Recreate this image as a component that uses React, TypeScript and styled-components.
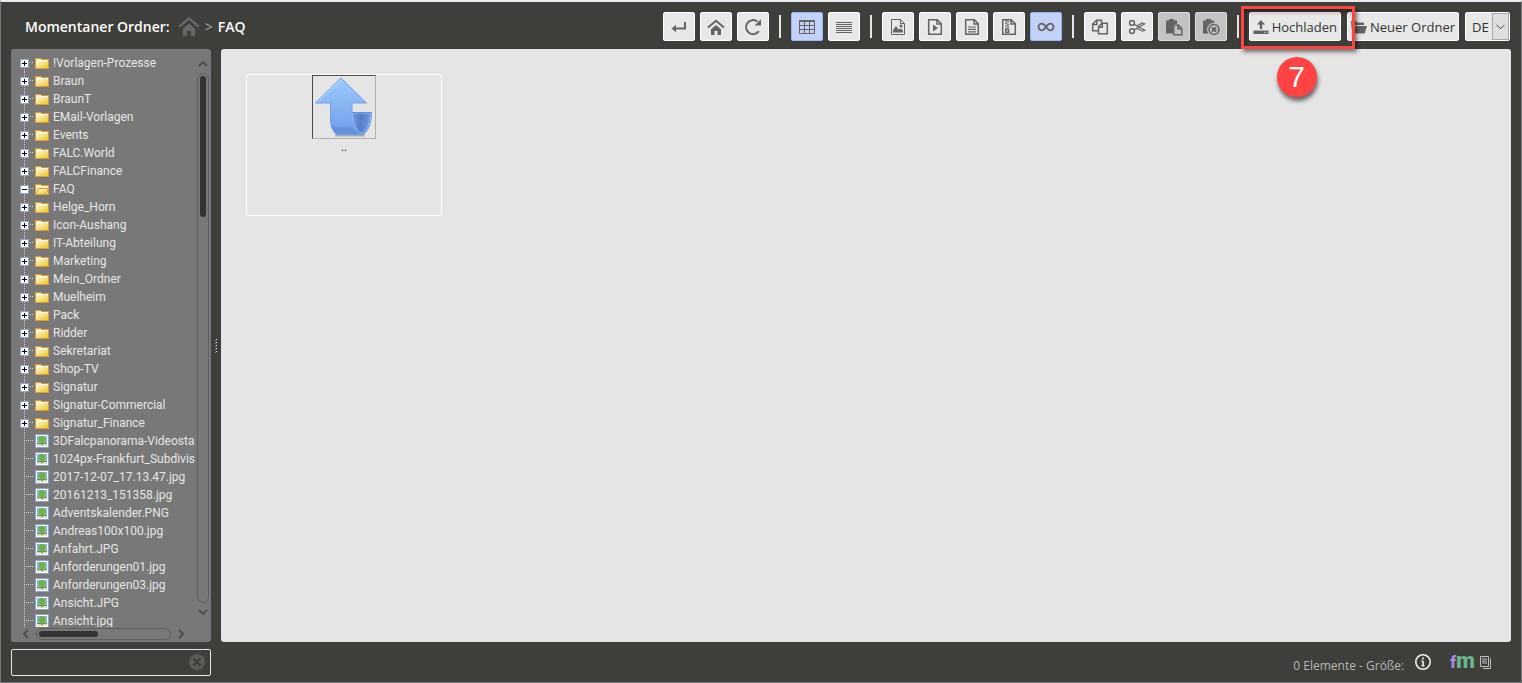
import React from 'react';
import styled, { createGlobalStyle } from 'styled-components';

const GlobalStyle = createGlobalStyle`
  *, *::before, *::after { box-sizing: border-box; }
  html, body { margin: 0; background: #3e3e3a; }
  body { font-family: "Open Sans", "Noto Sans", sans-serif; font-size: 13px; }
  button, input, select { font: inherit; margin: 0; }
`;

const Shell = styled.div`
  display: flex;
  flex-direction: column;
  height: 100vh;
  padding: 0 10px;
  background: #3e3e3a;
  border: 1px solid #77777a;
  border-top: 2px solid #e9ebed;
  overflow: hidden;
`;

const Header = styled.header`
  display: flex;
  align-items: center;
  justify-content: space-between;
  flex: none;
  height: 47px;
  padding: 2px 1px 0 14px;
`;

const Breadcrumb = styled.nav`
  display: flex;
  align-items: center;
  color: #fff;
  font-size: 14px;
  font-weight: 600;
  white-space: nowrap;
`;

const HomeLink = styled.a`
  display: flex;
  margin: 0 5px 2px 8px;
  color: #686868;
`;

const Chevron = styled.span`
  margin-right: 5px;
  color: #aaa;
  font-weight: 400;
`;

const Toolbar = styled.div`
  display: flex;
  align-items: center;
  gap: 10px;
`;

const ToolGroup = styled.div<{ $gap?: number }>`
  display: flex;
  gap: ${(p) => p.$gap ?? 5}px;
`;

const Divider = styled.span`
  width: 2px;
  height: 23px;
  background: #e5e5e5;
`;

type Tone = 'plain' | 'active' | 'disabled';
const fills = { plain: '#e8e8e8', active: '#c2d2f8', disabled: '#c3c3c3' };
const edges = { plain: '#ffffff', active: '#98b4f4', disabled: '#dedede' };

const ToolButton = styled.button<{ $tone?: Tone }>`
  display: flex;
  align-items: center;
  justify-content: center;
  width: 32px;
  height: 29px;
  padding: 0;
  color: #646464;
  background: ${(p) => fills[p.$tone ?? 'plain']};
  border: 1px solid ${(p) => edges[p.$tone ?? 'plain']};
  border-radius: 2px;
`;

const LabelButton = styled(ToolButton)`
  width: auto;
  gap: 3px;
  padding: 0 3px;

  span { color: #333; white-space: nowrap; }
`;

const Highlighted = styled.div`
  position: relative;
`;

const HighlightFrame = styled.div`
  position: absolute;
  z-index: 2;
  inset: -6px -14px -8px -8px;
  border: 3px solid #ff4343;
  box-shadow: 2px 3px 4px rgba(0, 0, 0, 0.5), inset 2px 3px 4px rgba(0, 0, 0, 0.4);
  pointer-events: none;
`;

const StepBadge = styled.div`
  position: absolute;
  z-index: 2;
  top: 45px;
  left: 28px;
  display: flex;
  align-items: center;
  justify-content: center;
  width: 40px;
  height: 40px;
  border-radius: 50%;
  background: #ff4343;
  box-shadow: 1px 4px 4px rgba(0, 0, 0, 0.55);
  color: #fff;
  font: 30px "Liberation Sans", Arial, sans-serif;
`;

const LanguageBox = styled.div`
  display: flex;
  position: relative;
`;

const LanguageSelect = styled.select`
  appearance: none;
  width: 45px;
  height: 29px;
  padding: 0 0 0 6px;
  color: #333;
  background: #e8e8e8;
  border: 1px solid #fff;
  border-radius: 2px;
`;

const SelectArrow = styled.span`
  position: absolute;
  top: 1px;
  right: 1px;
  display: flex;
  align-items: center;
  justify-content: center;
  width: 17px;
  height: 27px;
  background: #dedede;
  border: 1px solid #a8a8a8;
  pointer-events: none;
`;

const Body = styled.div`
  display: grid;
  grid-template-columns: 200px 10px minmax(0, 1fr);
  flex: 1;
  min-height: 0;
`;

const Sidebar = styled.aside`
  display: grid;
  grid-template-columns: minmax(0, 1fr) 16px;
  grid-template-rows: minmax(0, 1fr) 15px;
  min-height: 0;
  background: #787878;
  border-radius: 3px;
`;

const Tree = styled.ul`
  margin: 5px 0 0;
  padding: 0 0 0 9px;
  overflow: hidden;
  list-style: none;
`;

const TreeRow = styled.li`
  display: flex;
  align-items: center;
  height: 18px;
  font-family: Roboto, "Open Sans", sans-serif;
  font-size: 12px;
  white-space: nowrap;
`;

const Gutter = styled.span<{ $first?: boolean }>`
  display: flex;
  align-items: center;
  flex: none;
  width: 15px;
  height: 18px;
  background:
    repeating-linear-gradient(90deg, #d0d0d0 0 1px, transparent 1px 2px) 4px 8px / 9px 1px no-repeat,
    repeating-linear-gradient(#d0d0d0 0 1px, transparent 1px 2px) 4px ${(p) => (p.$first ? 9 : 0)}px / 1px 18px no-repeat;
`;

const Expander = styled.button`
  display: flex;
  width: 9px;
  height: 9px;
  padding: 0;
  border: 0;
  background: none;
`;

const TreeLink = styled.a`
  display: flex;
  align-items: center;
  gap: 4px;
  color: #e6e6e6;
  text-decoration: none;
`;

const ScrollColumn = styled.div`
  display: flex;
  flex-direction: column;
  align-items: center;
  justify-content: space-between;
  padding: 12px 0;
`;

const ScrollRow = styled.div`
  display: flex;
  align-items: center;
  justify-content: space-between;
  padding: 0 11px 1px 12px;
`;

const Track = styled.div<{ $row?: boolean }>`
  ${(p) => (p.$row ? 'height: 12px; margin: 0 7px;' : 'width: 12px; margin: 6px 0;')}
  flex: 1;
  padding: 2px;
  border: 1px solid #606060;
  border-radius: 6px;
`;

const Thumb = styled.div<{ $row?: boolean }>`
  width: ${(p) => (p.$row ? '46%' : '6px')};
  height: ${(p) => (p.$row ? '6px' : '27%')};
  background: #333;
  border-radius: 3px;
`;

const Splitter = styled.div`
  display: flex;
  align-items: center;
  justify-content: center;
`;

const Content = styled.main`
  padding: 25px;
  background: #e5e5e5;
  border-radius: 3px;
`;

const FileCard = styled.figure`
  display: flex;
  flex-direction: column;
  align-items: center;
  width: 196px;
  height: 142px;
  margin: 0;
  border: 1px solid #fff;
  border-radius: 2px;
`;

const Thumbnail = styled.a`
  display: flex;
  width: 64px;
  height: 64px;
  border: 1px solid;
  border-color: #4a4a46 #b0b0b0 #b0b0b0 #4a4a46;
`;

const FileName = styled.figcaption`
  color: #111;
  font-size: 11px;
  line-height: 16px;
`;

const Footer = styled.footer`
  display: flex;
  align-items: center;
  justify-content: space-between;
  flex: none;
  height: 40px;
  padding-right: 19px;
`;

const SearchBox = styled.div`
  display: flex;
  align-items: center;
  width: 200px;
  height: 27px;
  padding-right: 5px;
  border: 1px solid #e5e5e5;
  border-radius: 2px;
`;

const SearchInput = styled.input`
  flex: 1;
  min-width: 0;
  padding: 0 6px;
  color: #e5e5e5;
  background: none;
  border: 0;
  outline: 0;
`;

const ClearButton = styled.button`
  display: flex;
  padding: 0;
  background: none;
  border: 0;
`;

const Status = styled.div`
  display: flex;
  align-items: center;
  color: #b8b8b8;
`;

const StatusText = styled.span`
  margin-right: 10px;
  padding-top: 6px;
  font-size: 12px;
`;

const Logo = styled.a`
  margin: 0 5px 0 18px;
  color: #68b58c;
  font: 900 22px/20px Roboto, sans-serif;
  text-decoration: none;

  span { color: #a98be0; font-size: 16px; }
`;

type IconProps = { children: React.ReactNode; w?: number; h?: number };
const Icon = ({ children, w = 18, h = 18 }: IconProps) => (
  <svg width={w} height={h} viewBox={`0 0 ${w} ${h}`} fill="none" stroke="currentColor" strokeWidth="1.5" aria-hidden="true">
    {children}
  </svg>
);

const HomeShape = () => (
  <>
    <path d="M1 9.6 9 2.8l8 6.8" strokeWidth="2" />
    <path d="M4 11.2 9 7l5 4.2V17h-3.5v-4h-3v4H4z" fill="currentColor" stroke="none" />
  </>
);

const Page = () => <path d="M2.7 1.7h8.6l4 4v10.6H2.7zM11 1.9V6h4.1" />;
const solid = { fill: 'currentColor', stroke: 'none' };

const EnterIcon = () => (
  <Icon><path d="M15 4v6.5H5" strokeWidth="2" /><path {...solid} d="M1.5 10.5 6 6.8v7.4z" /></Icon>
);
const HomeIcon = () => <Icon><HomeShape /></Icon>;
const RefreshIcon = () => (
  <Icon>
    <path d="M14.8 13.2A7 7 0 1 1 13.4 3.6" strokeWidth="2" />
    <path {...solid} d="M17 1.3v6.2h-6.4z" />
  </Icon>
);
const GridIcon = () => (
  <Icon>
    <path d="M1 3h16" strokeWidth="2" />
    <path d="M1.5 3v12.5h15V3M6.5 4v12M11.5 4v12M1 7.5h16M1 11.5h16" strokeWidth="1" />
  </Icon>
);
const ListIcon = () => (
  <Icon><path d="M1 4.5h16M1 6.5h16M1 8.5h16M1 10.5h16M1 12.5h16M1 14.5h16" strokeWidth="1" /></Icon>
);
const ImageIcon = () => (
  <Icon>
    <path d="M2.5 1.5h9l4 4v11h-13zM11.5 2v3.5H15" strokeWidth="1" />
    <path {...solid} d="M4 14.5V12l3-4 2.5 3.5 2-1 2.5 2v2z" /><circle {...solid} cx="12" cy="8" r="1.5" />
  </Icon>
);
const VideoIcon = () => <Icon><Page /><path {...solid} d="M7 6.5v7l5-3.5z" /></Icon>;
const TextIcon = () => <Icon><Page /><path d="M5 9h8M5 11.4h8M5 13.8h8" strokeWidth="1.2" /></Icon>;
const ZipIcon = () => (
  <Icon>
    <Page />
    <path d="M6.2 2v8.5" strokeDasharray="1.3 1.3" strokeWidth="2" />
    <path d="M8 3.3v7" strokeDasharray="1.3 1.3" strokeWidth="2" />
    <path d="M5.8 11.2h2.8v3H5.8z" />
  </Icon>
);
const InfinityIcon = () => (
  <Icon><path d="M9 9C7.3 6.4 6.3 5.7 4.8 5.7a3.3 3.3 0 0 0 0 6.6C6.3 12.3 7.3 11.6 9 9s2.7-3.3 4.2-3.3a3.3 3.3 0 0 1 0 6.6C11.7 12.3 10.7 11.6 9 9z" strokeWidth="1.8" /></Icon>
);
const CopyIcon = () => (
  <Icon>
    <path d="M7 12.8H1.7V6L5.5 2.2h5V5M5.8 2.4v4H2" />
    <path d="M7.5 8.8 11 5.2h5.3v10.5H7.5zM11.3 5.4v3.8H7.7" />
  </Icon>
);
const CutIcon = () => (
  <Icon>
    <circle cx="4" cy="4.9" r="2.4" /><circle cx="4" cy="13.1" r="2.4" />
    <path d="m6 6.3 10.7 6-2.4.9-5-2.8-3.3 1.3M6 11.8l10.7-6-2.4-.9-5 2.8L6 6.4" strokeWidth="1.2" />
  </Icon>
);
const PasteIcon = () => (
  <Icon>
    <path {...solid} d="M1 2.5h3V1h5v1.5h3V6H8v9.5H1z" />
    <path d="M8.7 7h4.5l3.6 3.400v6.400H8.7zM13 7.2v3.5h3.6" />
  </Icon>
);
const ClearClipIcon = () => (
  <Icon>
    <path {...solid} d="M1 2.5h3V1h5v1.5h3V5a6.500 6.500 0 0 0-5.500 10.500H1z" />
    <circle cx="12" cy="11.5" r="5" />
    <path d="m10 9.5 4 4M14 9.5l-4 4" strokeWidth="2.2" />
  </Icon>
);
const UploadIcon = () => (
  <Icon w={16}>
    <path {...solid} d="M8 2 4 6.5h2.8V11h2.4V6.5H12zM.5 12.5h15V16H.5z" />
    <path d="M11 14.3h1M13.3 14.3h1" stroke="#e8e8e8" strokeWidth="1" />
  </Icon>
);
const FolderIcon = () => (
  <Icon w={16}><path {...solid} d="M0 3h5l1 1.5h7V7H3L.8 12zM3.4 8H16l-2.3 7.5H.5z" /></Icon>
);

const TreeFolder = ({ open }: { open?: boolean }) => (
  <svg width="14" height="12" viewBox="0 0 14 12" aria-hidden="true">
    <defs>
      <linearGradient id="gold" x1="0" y1="0" x2="1" y2="1">
        <stop offset="0" stopColor="#fffbe0" /><stop offset="1" stopColor="#efc51c" />
      </linearGradient>
    </defs>
    <path d="M.5 1.5h5l1 1h7v9H.5z" fill="#fff3b8" stroke="#dc9a35" />
    {open
      ? <path d="M3.5 5.5h10l-2.5 6H1z" fill="url(#gold)" stroke="#dc9a35" />
      : <path d="M1 5h5l1-1h6v7H1z" fill="url(#gold)" />}
    {!open && <path d="M1.5 4.5H6l1-1h6" fill="none" stroke="#fff" />}
  </svg>
);
const TreeImage = () => (
  <svg width="14" height="14" viewBox="0 0 14 14" aria-hidden="true">
    <path d="M.5.5h13v13H.5z" fill="#fff" stroke="#86a5d8" />
    <path d="M2 2h10v10H2z" fill="#8db3e6" />
    <path d="M2 9h10v3H2z" fill="#d3e4c4" />
    <path d="M2 9.5h10" stroke="#5a9a42" />
    <circle cx="7" cy="5.5" r="3.4" fill="#6cb33f" />
    <path d="M7 9v2" stroke="#b97a3a" strokeWidth="2" />
  </svg>
);
const ExpandMark = ({ open }: { open?: boolean }) => (
  <svg width="9" height="9" viewBox="0 0 9 9" aria-hidden="true">
    <path d="M.5.5h8v8h-8z" fill="#fff" stroke="#8fa5be" />
    <path d={open ? 'M2 4.5h5' : 'M2 4.5h5M4.5 2v5'} stroke="#000" />
  </svg>
);
const Arrow = ({ d, row }: { d: string; row?: boolean }) => (
  <svg width={row ? 6 : 10} height={row ? 10 : 6} viewBox={row ? '0 0 6 10' : '0 0 10 6'} fill="none" stroke="#4e4e4e" strokeWidth="2" aria-hidden="true">
    <path d={d} />
  </svg>
);

const UpArrow = () => (
  <svg width="62" height="62" viewBox="0 0 62 62" aria-hidden="true">
    <defs>
      <linearGradient id="sky" x1="0" y1="0" x2="0" y2="1">
        <stop offset="0" stopColor="#9ccbfb" /><stop offset="0.8" stopColor="#7ba6ee" /><stop offset="1" stopColor="#6b97e0" />
      </linearGradient>
      <linearGradient id="curl" x1="0" y1="0" x2="1" y2="0">
        <stop offset="0" stopColor="#7299de" /><stop offset="0.45" stopColor="#567dc6" /><stop offset="1" stopColor="#7198e0" />
      </linearGradient>
    </defs>
    <path d="M22 59.5h30" stroke="#a5a9b0" strokeWidth="2" />
    <path d="M28 2 2.5 27h15v17c0 6 2 11 6 14.5H50c5-3 8.500-11 8.500-22H39V27h14.500z" fill="url(#sky)" stroke="#6ea0e8" />
    <path d="M18 48c3 4 8 4 21 3 2 3 4 6 7 7H24c-3-2-5-5-6-10z" fill="#6690da" />
    <path d="M39.500 37h18c0 9-4 19.500-9 19.500s-9-10-9-19.500z" fill="url(#curl)" stroke="#8db5f7" />
    <path d="M39 36.500h19.500" stroke="#6690e0" />
    <path d="M28 3.500 5 26" fill="none" stroke="#bfe0ff" />
  </svg>
);

const folders = [
  '!Vorlagen-Prozesse', 'Braun', 'BraunT', 'EMail-Vorlagen', 'Events', 'FALC.World', 'FALCFinance', 'FAQ',
  'Helge_Horn', 'Icon-Aushang', 'IT-Abteilung', 'Marketing', 'Mein_Ordner', 'Muelheim', 'Pack', 'Ridder',
  'Sekretariat', 'Shop-TV', 'Signatur', 'Signatur-Commercial', 'Signatur_Finance',
];
const files = [
  '3DFalcpanorama-Videosta', '1024px-Frankfurt_Subdivis', '2017-12-07_17.13.47.jpg', '20161213_151358.jpg',
  'Adventskalender.PNG', 'Andreas100x100.jpg', 'Anfahrt.JPG', 'Anforderungen01.jpg', 'Anforderungen03.jpg',
  'Ansicht.JPG', 'Ansicht.jpg',
];

type Tool = { label: string; icon: React.ReactNode; tone?: Tone };
const groups: Tool[][] = [
  [
    { label: 'Zurück', icon: <EnterIcon /> },
    { label: 'Start', icon: <HomeIcon /> },
    { label: 'Aktualisieren', icon: <RefreshIcon /> },
  ],
  [
    { label: 'Kacheln', icon: <GridIcon />, tone: 'active' },
    { label: 'Liste', icon: <ListIcon /> },
  ],
  [
    { label: 'Bilder', icon: <ImageIcon /> },
    { label: 'Videos', icon: <VideoIcon /> },
    { label: 'Dokumente', icon: <TextIcon /> },
    { label: 'Archive', icon: <ZipIcon /> },
    { label: 'Alle', icon: <InfinityIcon />, tone: 'active' },
  ],
  [
    { label: 'Kopieren', icon: <CopyIcon /> },
    { label: 'Ausschneiden', icon: <CutIcon /> },
    { label: 'Einfügen', icon: <PasteIcon />, tone: 'disabled' },
    { label: 'Zwischenablage leeren', icon: <ClearClipIcon />, tone: 'disabled' },
  ],
];

export default function App() {
  return (
    <>
      <GlobalStyle />
      <Shell>
        <Header>
          <Breadcrumb>
            Momentaner Ordner:
            <HomeLink href="#" aria-label="Start">
              <svg width="22" height="22" viewBox="0 0 18 18" fill="none" stroke="currentColor" aria-hidden="true"><HomeShape /></svg>
            </HomeLink>
            <Chevron>&gt;</Chevron>
            FAQ
          </Breadcrumb>
          <Toolbar>
            {groups.map((group, i) => (
              <React.Fragment key={i}>
                <ToolGroup>
                  {group.map((t) => (
                    <ToolButton key={t.label} $tone={t.tone} disabled={t.tone === 'disabled'} aria-label={t.label}>
                      {t.icon}
                    </ToolButton>
                  ))}
                </ToolGroup>
                <Divider />
              </React.Fragment>
            ))}
            <ToolGroup $gap={6}>
              <Highlighted>
                <LabelButton><UploadIcon /><span>Hochladen</span></LabelButton>
                <HighlightFrame />
                <StepBadge>7</StepBadge>
              </Highlighted>
              <LabelButton><FolderIcon /><span>Neuer Ordner</span></LabelButton>
              <LanguageBox>
                <LanguageSelect aria-label="Sprache" defaultValue="DE"><option>DE</option></LanguageSelect>
                <SelectArrow>
                  <svg width="9" height="6" viewBox="0 0 9 6" fill="none" stroke="#444" aria-hidden="true"><path d="m.5.8 4 4 4-4" /></svg>
                </SelectArrow>
              </LanguageBox>
            </ToolGroup>
          </Toolbar>
        </Header>

        <Body>
          <Sidebar>
            <Tree>
              {folders.map((name, i) => (
                <TreeRow key={name}>
                  <Gutter $first={i === 0}>
                    <Expander aria-label={`${name} umschalten`}><ExpandMark open={name === 'FAQ'} /></Expander>
                  </Gutter>
                  <TreeLink href="#"><TreeFolder open={name === 'FAQ'} />{name}</TreeLink>
                </TreeRow>
              ))}
              {files.map((name) => (
                <TreeRow key={name}>
                  <Gutter />
                  <TreeLink href="#"><TreeImage />{name}</TreeLink>
                </TreeRow>
              ))}
            </Tree>
            <ScrollColumn>
              <Arrow d="m1 5 4-4 4 4" />
              <Track><Thumb /></Track>
              <Arrow d="m1 1 4 4 4-4" />
            </ScrollColumn>
            <ScrollRow>
              <Arrow row d="M5 1 1 5l4 4" />
              <Track $row><Thumb $row /></Track>
              <Arrow row d="m1 1 4 4-4 4" />
            </ScrollRow>
          </Sidebar>
          <Splitter>
            <svg width="3" height="14" viewBox="0 0 3 14" aria-hidden="true">
              <path d="M.5 1v13" stroke="#888" strokeDasharray="1 2" /><path d="M1.5 0v14" stroke="#eee" strokeDasharray="1 2" />
            </svg>
          </Splitter>
          <Content>
            <FileCard>
              <Thumbnail href="#" aria-label="Übergeordneter Ordner"><UpArrow /></Thumbnail>
              <FileName>..</FileName>
            </FileCard>
          </Content>
        </Body>

        <Footer>
          <SearchBox>
            <SearchInput type="text" aria-label="Filter" />
            <ClearButton aria-label="Filter löschen">
              <svg width="16" height="16" viewBox="0 0 16 16" aria-hidden="true">
                <circle cx="8" cy="8" r="8" fill="#5b5b58" /><path d="m4.5 4.5 7 7M11.5 4.5l-7 7" stroke="#3a3a37" strokeWidth="2" />
              </svg>
            </ClearButton>
          </SearchBox>
          <Status>
            <StatusText>0 Elemente - Größe:</StatusText>
            <svg width="18" height="18" viewBox="0 0 18 18" fill="none" stroke="#eee" strokeWidth="1.6" aria-hidden="true">
              <circle cx="9" cy="9" r="7.2" /><path d="M9 8v5M9 4.5v2M7.5 8.3H9M7.5 12.8h3" />
            </svg>
            <Logo href="#"><span>f</span>m</Logo>
            <svg width="12" height="13" viewBox="0 0 12 13" fill="none" stroke="#c0c0c0" aria-hidden="true">
              <path d="M.5.5h8v10h-8zM2 3h5M2 5h5M2 7h5M10.5 2.5v10H3" />
            </svg>
          </Status>
        </Footer>
      </Shell>
    </>
  );
}
